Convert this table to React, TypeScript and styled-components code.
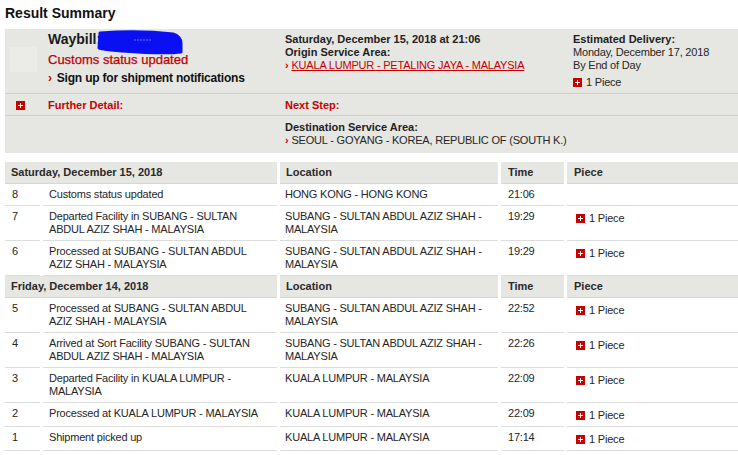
import React from "react";
import styled, { createGlobalStyle, css } from "styled-components";

const RED = "#c80000";
const PANEL = "#e6e6e2";
const INK = "#262626";

const GlobalStyle = createGlobalStyle`
  html, body { margin: 0; padding: 0; background: #fff; }
  body {
    overflow: hidden;
    font-family: "Liberation Sans", Arial, Helvetica, sans-serif;
    font-size: 12px;
    color: ${INK};
  }
`;

const regular = css`
  font-size: 11px;
  letter-spacing: -0.2px;
  font-weight: normal;
`;

const bold = css`
  font-size: 11px;
  font-weight: bold;
`;

const Page = styled.div`
  width: 733px;
  padding-left: 5px;
`;

const Title = styled.h2`
  margin: 0 0 7px;
  padding-top: 5px;
  font-size: 14px;
  line-height: 17px;
  font-weight: bold;
  color: #111;
`;

const Summary = styled.section`
  background: ${PANEL};
  width: 733px;
`;

const SummaryRow = styled.div<{ $divider?: boolean; $h: number }>`
  display: grid;
  grid-template-columns: 35px 237px 288px 1fr;
  height: ${(p) => p.$h}px;
  box-sizing: border-box;
  border-top: ${(p) => (p.$divider ? "1px solid #cfcfcb" : "none")};
`;

const Cell = styled.div<{ $pt: number; $lh?: number }>`
  position: relative;
  padding: ${(p) => p.$pt}px 0 0 8px;
  line-height: ${(p) => p.$lh ?? 13}px;
  color: #222;
`;

const IconCell = styled.div`
  display: flex;
  justify-content: center;
  padding-top: 7px;
`;

const Thumb = styled.div`
  margin: 18px 0 0 5px;
  width: 27px;
  height: 25px;
  background: #ebebe8;
`;

const WaybillLine = styled.div`
  font-size: 14px;
  line-height: 16px;
  font-weight: bold;
  color: #1a1a1a;
`;

const StatusLine = styled.div`
  margin-top: 5px;
  font-size: 13px;
  line-height: 16px;
  color: #c00000;
  -webkit-text-stroke: 0.25px #c00000;
`;

const SignupLine = styled.div`
  margin-top: 2px;
  font-size: 12px;
  letter-spacing: -0.2px;
  line-height: 16px;
  font-weight: bold;
  color: #111;
`;

const Strong = styled.div`
  ${bold};
  color: #222;
`;

const Plain = styled.div<{ $nowrap?: boolean }>`
  ${regular};
  color: ${INK};
  white-space: ${(p) => (p.$nowrap ? "nowrap" : "normal")};
`;

const RedStrong = styled.div`
  ${bold};
  color: ${RED};
`;

const LinkText = styled.span`
  color: ${RED};
  text-decoration: underline;
`;

const Chevron = styled.span<{ $gap?: number }>`
  color: ${RED};
  font-weight: bold;
  margin-right: ${(p) => p.$gap ?? 3}px;
`;

const PieceLine = styled.div`
  ${regular};
  margin-top: 3px;
  line-height: 14px;
  color: ${INK};
`;

const IconSvg = styled.svg`
  display: inline-block;
  vertical-align: -1px;
  margin-right: 4px;
`;

const Redaction = styled.svg`
  position: absolute;
  left: 56px;
  top: 0;
`;

const Table = styled.table`
  margin: 9px 0 0 -3px;
  border-collapse: separate;
  border-spacing: 3px 0;
  table-layout: fixed;
  width: 739px;
`;

const Col = styled.col<{ $w: number }>`
  width: ${(p) => p.$w}px;
`;

const HeadCell = styled.th<{ $pl?: number }>`
  ${bold};
  background: ${PANEL};
  text-align: left;
  line-height: 14px;
  color: #2a2a2a;
  padding: 3px 6px 4px ${(p) => p.$pl ?? 6}px;
  border-bottom: 1px solid #d6d6d3;
`;

const BodyCell = styled.td<{ $piece?: boolean; $pl?: number; $pr?: number }>`
  ${regular};
  vertical-align: top;
  text-align: left;
  line-height: 13.5px;
  color: ${INK};
  padding: ${(p) => (p.$piece ? "6.5px" : "4px")} ${(p) => p.$pr ?? 4}px 3px
    ${(p) => p.$pl ?? 6}px;
  border-bottom: 1px solid #dcdcdc;
`;

const PlusIcon = () => (
  <IconSvg width={9} height={9} viewBox="0 0 9 9">
    <rect width="9" height="9" fill={RED} />
    <rect x="4" y="2" width="1" height="5" fill="#fff" />
    <rect x="2" y="4" width="5" height="1" fill="#fff" />
  </IconSvg>
);

type Row = { n: number; desc: string; loc: string; time: string; piece: boolean };

const SUBANG = "SUBANG - SULTAN ABDUL AZIZ SHAH - MALAYSIA";
const KL = "KUALA LUMPUR - MALAYSIA";

const groups: { date: string; rows: Row[] }[] = [
  {
    date: "Saturday, December 15, 2018",
    rows: [
      { n: 8, desc: "Customs status updated", loc: "HONG KONG - HONG KONG", time: "21:06", piece: false },
      { n: 7, desc: "Departed Facility in SUBANG - SULTAN ABDUL AZIZ SHAH - MALAYSIA", loc: SUBANG, time: "19:29", piece: true },
      { n: 6, desc: "Processed at SUBANG - SULTAN ABDUL AZIZ SHAH - MALAYSIA", loc: SUBANG, time: "19:29", piece: true },
    ],
  },
  {
    date: "Friday, December 14, 2018",
    rows: [
      { n: 5, desc: "Processed at SUBANG - SULTAN ABDUL AZIZ SHAH - MALAYSIA", loc: SUBANG, time: "22:52", piece: true },
      { n: 4, desc: "Arrived at Sort Facility SUBANG - SULTAN ABDUL AZIZ SHAH - MALAYSIA", loc: SUBANG, time: "22:26", piece: true },
      { n: 3, desc: "Departed Facility in KUALA LUMPUR - MALAYSIA", loc: KL, time: "22:09", piece: true },
      { n: 2, desc: "Processed at KUALA LUMPUR - MALAYSIA", loc: KL, time: "22:09", piece: true },
      { n: 1, desc: "Shipment picked up", loc: KL, time: "17:14", piece: true },
    ],
  },
];

export default function App() {
  return (
    <Page>
      <GlobalStyle />
      <Title>Result Summary</Title>
      <Summary>
        <SummaryRow $h={64}>
          <div>
            <Thumb />
          </div>
          <Cell $pt={2}>
            <WaybillLine>Waybill:</WaybillLine>
            <Redaction width={88} height={28} viewBox="0 0 88 28">
              <path
                d="M4 4 C30 2 60 3 77 5 C82 6 85 10 85 14 L85 23 C70 25 40 23 26 22 C14 21 6 20 3 19 Z"
                fill="#0b10f2"
                stroke="#0b10f2"
                strokeWidth="3"
                strokeLinejoin="round"
              />
              <path d="M38 11 H56" stroke="#6c70ff" strokeWidth="1" strokeDasharray="2 1" />
            </Redaction>
            <StatusLine>Customs status updated</StatusLine>
            <SignupLine>
              <Chevron $gap={5}>›</Chevron>Sign up for shipment notifications
            </SignupLine>
          </Cell>
          <Cell $pt={4}>
            <Strong>Saturday, December 15, 2018 at 21:06</Strong>
            <Strong>Origin Service Area:</Strong>
            <Plain>
              <Chevron>›</Chevron>
              <LinkText>KUALA LUMPUR - PETALING JAYA - MALAYSIA</LinkText>
            </Plain>
          </Cell>
          <Cell $pt={4}>
            <Strong>Estimated Delivery:</Strong>
            <Plain>Monday, December 17, 2018</Plain>
            <Plain>By End of Day</Plain>
            <PieceLine>
              <PlusIcon />1 Piece
            </PieceLine>
          </Cell>
        </SummaryRow>
        <SummaryRow $h={22} $divider>
          <IconCell>
            <PlusIcon />
          </IconCell>
          <Cell $pt={4} $lh={14}>
            <RedStrong>Further Detail:</RedStrong>
          </Cell>
          <Cell $pt={4} $lh={14}>
            <RedStrong>Next Step:</RedStrong>
          </Cell>
          <div />
        </SummaryRow>
        <SummaryRow $h={38} $divider>
          <div />
          <div />
          <Cell $pt={5}>
            <Strong>Destination Service Area:</Strong>
            <Plain $nowrap>
              <Chevron>›</Chevron>SEOUL - GOYANG - KOREA, REPUBLIC OF (SOUTH K.)
            </Plain>
          </Cell>
          <div />
        </SummaryRow>
      </Summary>
      <Table>
        <colgroup>
          <Col $w={35} />
          <Col $w={234} />
          <Col $w={218} />
          <Col $w={63} />
          <Col $w={171} />
        </colgroup>
        {groups.map((g) => (
          <tbody key={g.date}>
            <tr>
              <HeadCell colSpan={2}>{g.date}</HeadCell>
              <HeadCell>Location</HeadCell>
              <HeadCell $pl={7}>Time</HeadCell>
              <HeadCell $pl={7}>Piece</HeadCell>
            </tr>
            {g.rows.map((r) => (
              <tr key={r.n}>
                <BodyCell $pl={7}>{r.n}</BodyCell>
                <BodyCell $pr={10}>{r.desc}</BodyCell>
                <BodyCell $pl={5}>{r.loc}</BodyCell>
                <BodyCell $pl={7}>{r.time}</BodyCell>
                <BodyCell $piece $pl={9}>
                  {r.piece ? (
                    <>
                      <PlusIcon />1 Piece
                    </>
                  ) : null}
                </BodyCell>
              </tr>
            ))}
          </tbody>
        ))}
      </Table>
    </Page>
  );
}
